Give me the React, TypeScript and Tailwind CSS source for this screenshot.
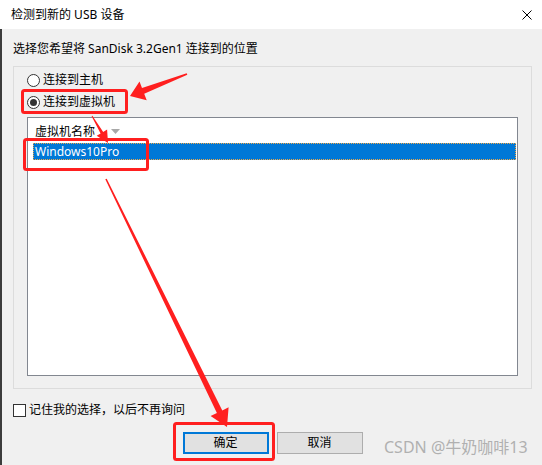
export default function App() {
  return (
    <div className="relative w-[542px] h-[465px] overflow-hidden bg-[#f0f0f0] font-['Noto_Sans','Noto_Sans_CJK_SC',sans-serif] text-[12px] text-black">
      <div className="h-[29px] bg-white flex items-center justify-between pl-[11px] pr-[10px]">
        <span className="leading-[16px]">检测到新的 USB 设备</span>
        <svg width="10" height="10" viewBox="0 0 10 10">
          <path d="M0.5 0.5L9.5 9.5M9.5 0.5L0.5 9.5" stroke="#000" strokeWidth="1" fill="none" />
        </svg>
      </div>
      <div className="h-[436px] border-l-2 border-[#3c3c3c] pl-[11px] pr-[10px] pt-[12px] flex flex-col">
        <div className="leading-[16px] h-[16px]">选择您希望将 SanDisk 3.2Gen1 连接到的位置</div>
        <div className="mt-[9px] h-[323px] border border-[#dcdcdc] px-[13px] pt-[5px] pb-[12px] flex flex-col">
          <div className="flex items-center h-[16px]">
            <span className="w-[13px] h-[13px] rounded-full border border-[#333333] bg-white flex items-center justify-center" />
            <span className="ml-[3px] leading-[16px]">连接到主机</span>
          </div>
          <div className="flex items-center h-[16px] mt-[6px]">
            <span className="w-[13px] h-[13px] rounded-full border border-[#333333] bg-white flex items-center justify-center">
              <span className="w-[7px] h-[7px] rounded-full bg-[#333333]" />
            </span>
            <span className="ml-[3px] leading-[16px]">连接到虚拟机</span>
          </div>
          <div className="mt-[7px] flex-1 border border-[#828790] bg-white flex flex-col">
            <div className="flex items-start pl-[7px] pt-[6px] h-[25px]">
              <span className="leading-[16px]">虚拟机名称</span>
              <svg className="ml-[16px] mt-[5px]" width="9" height="5" viewBox="0 0 9 5">
                <path d="M0 0H9L4.5 5Z" fill="#a8a8a8" />
              </svg>
            </div>
            <div className="ml-[5px] mr-[1px] h-[17px] bg-[#0078d7] border border-dotted border-[#f0a848] flex items-center pl-[1px]">
              <span className="text-white leading-[15px]">Windows10Pro</span>
            </div>
          </div>
        </div>
        <div className="mt-[13px] h-[16px] flex items-center">
          <span className="w-[13px] h-[13px] border border-[#333333] bg-white" />
          <span className="ml-[3px] leading-[16px]">记住我的选择，以后不再询问</span>
        </div>
        <div className="mt-[14px] flex justify-center gap-[8px]">
          <button className="w-[86px] h-[22px] bg-[#e1e1e1] border-2 border-[#0078d7] flex items-center justify-center leading-[16px]">确定</button>
          <button className="w-[86px] h-[22px] bg-[#e1e1e1] border border-[#adadad] flex items-center justify-center leading-[16px]">取消</button>
        </div>
      </div>

      <span className="absolute left-[384px] top-[437px] text-[16px] leading-[20px] text-[#b0b0b0] font-['Noto_Sans','Noto_Sans_CJK_SC',sans-serif]">
        CSDN @牛奶咖啡13
      </span>

      <svg className="absolute left-0 top-0 pointer-events-none" width="542" height="465" viewBox="0 0 542 465">
        <rect x="22.5" y="90.5" width="104" height="22" rx="2" fill="none" stroke="#ff1f1f" strokeWidth="3" />
        <rect x="24.5" y="139.5" width="123" height="30" rx="2" fill="none" stroke="#ff1f1f" strokeWidth="3" />
        <rect x="174.5" y="423.5" width="99" height="36" rx="2" fill="none" stroke="#ff1f1f" strokeWidth="3" />
        <polygon
          points="187.3,74.7 186.7,73.3 142,88.1 139.5,81.6 130,96 146.7,100.2 144.2,93.7"
          fill="#ff1f1f"
        />
        <polygon
          points="91.6,116.3 92.4,115.7 103.2,131.9 107.1,129.6 108,143 96.7,135.8 100.6,133.4"
          fill="#ff1f1f"
        />
        <polygon
          points="105.3,179.35 106.7,178.65 222.3,410.4 228.6,407.3 227,427 210.6,416.1 216.9,413"
          fill="#ff1f1f"
        />
      </svg>
    </div>
  );
}
